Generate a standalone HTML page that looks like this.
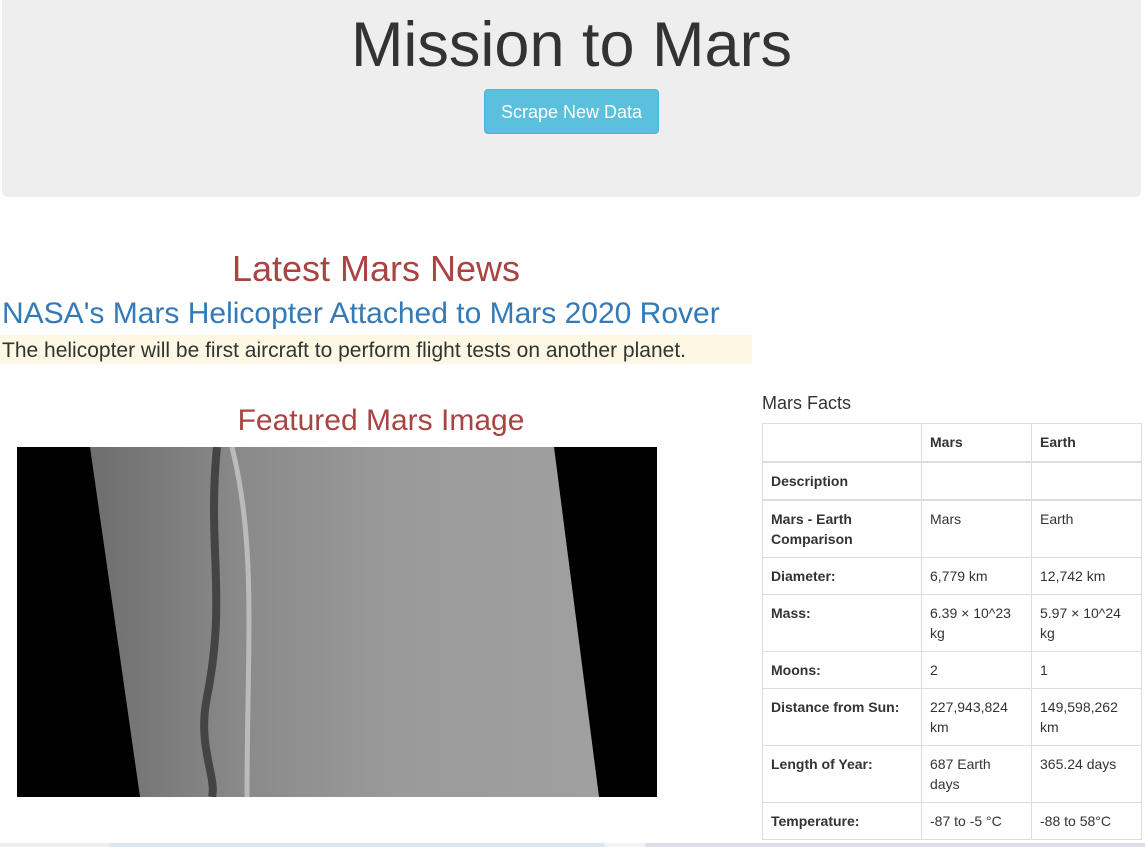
<!DOCTYPE html>
<html><head><meta charset="utf-8"><style>
body{margin:0;font-family:"Liberation Sans",Arial,sans-serif;color:#333;background:#fff;width:1145px;height:847px;overflow:hidden;position:relative}
.jumbo{position:absolute;left:2px;top:0;width:1139px;height:197px;background:#eee;border-radius:0 0 6px 6px;text-align:center}
.jumbo h1{margin:0;position:absolute;top:9px;width:100%;font-size:63px;font-weight:400;color:#333}
.btn{position:absolute;left:482px;top:89px;width:175px;height:45px;background:#5bc0de;border:1px solid #46b8da;border-radius:4px;color:#fff;font-size:18px;line-height:44px;box-sizing:border-box}
.h2{position:absolute;font-weight:400;color:#a94442;margin:0}
.news{left:0;width:752px;text-align:center;top:248px;font-size:36px}
.head{position:absolute;left:2px;top:297px;font-size:30px;color:#337ab7}
.para{position:absolute;left:0;top:335px;width:752px;height:29px;background:#fcf8e3;font-size:21px;line-height:31px;padding-left:2px;box-sizing:border-box;white-space:nowrap}
.feat{left:0;width:762px;text-align:center;top:404px;font-size:30px}
.img{position:absolute;left:17px;top:447px;width:640px;height:350px;background:#000;overflow:hidden}
.cap{position:absolute;left:762px;top:393px;font-size:18px;color:#333}
table{position:absolute;left:762px;top:423px;border-collapse:collapse;font-size:14px;width:380px}
td{border:1px solid #ddd;padding:8px 8px 8px;vertical-align:top;line-height:20px}
td:first-child{font-weight:bold;width:142px}
td:nth-child(2){width:93px}
tr.dbl td{border-bottom:2px solid #ddd}
.foot{position:absolute;left:0;top:843px;width:1145px;height:4px;background:linear-gradient(90deg,#eee 0 110px,#dde6ee 110px 605px,#f4f4f4 605px 645px,#dcdfe8 645px)}
</style></head><body>
<div class="jumbo"><h1>Mission to Mars</h1><div class="btn">Scrape New Data</div></div>
<h2 class="h2 news">Latest Mars News</h2>
<div class="head">NASA's Mars Helicopter Attached to Mars 2020 Rover</div>
<div class="para">The helicopter will be first aircraft to perform flight tests on another planet.</div>
<h2 class="h2 feat">Featured Mars Image</h2>
<div class="img"><svg width="640" height="350"><defs><linearGradient id="g" x1="0" x2="1"><stop offset="0" stop-color="#6e6e6e"/><stop offset="0.3" stop-color="#8a8a8a"/><stop offset="0.6" stop-color="#9a9a9a"/><stop offset="1" stop-color="#a0a0a0"/></linearGradient></defs><polygon points="73,0 537,0 582,350 123,350" fill="url(#g)"/><path d="M200,0 C190,100 210,150 190,250 C180,300 200,330 195,350" stroke="#444" stroke-width="8" fill="none"/><path d="M215,0 C240,100 230,200 230,350" stroke="#bbb" stroke-width="5" fill="none"/></svg></div>
<div class="cap">Mars Facts</div>
<table>
<tr class="dbl" style="height:38px"><td></td><td style="font-weight:bold">Mars</td><td style="font-weight:bold">Earth</td></tr>
<tr class="dbl" style="height:38px"><td>Description</td><td></td><td></td></tr>
<tr><td>Mars - Earth Comparison</td><td>Mars</td><td>Earth</td></tr>
<tr><td>Diameter:</td><td>6,779 km</td><td>12,742 km</td></tr>
<tr><td>Mass:</td><td>6.39 × 10^23 kg</td><td>5.97 × 10^24 kg</td></tr>
<tr><td>Moons:</td><td>2</td><td>1</td></tr>
<tr><td>Distance from Sun:</td><td>227,943,824 km</td><td>149,598,262 km</td></tr>
<tr><td>Length of Year:</td><td>687 Earth days</td><td>365.24 days</td></tr>
<tr><td>Temperature:</td><td>-87 to -5 °C</td><td>-88 to 58°C</td></tr>
</table>
<div class="foot"></div>
</body></html>
